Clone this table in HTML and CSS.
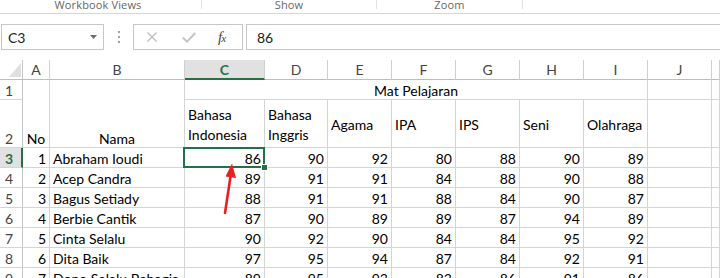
FILE: index.html
```html
<!DOCTYPE html>
<html>
<head>
<meta charset="utf-8">
<link rel="stylesheet" href="styles.css">
</head>
<body>
<div class="ribbon">
  <div class="group g1">Workbook Views</div>
  <div class="group g2">Show</div>
  <div class="group g3">Zoom</div>
</div>
<div class="fbar">
  <div class="namebox"><span>C3</span><svg class="dd" width="7" height="4" viewBox="0 0 7 4"><path d="M0 0H7L3.5 4Z" fill="#6d6d6d"/></svg></div>
  <div class="grip"><i></i><i></i><i></i></div>
  <div class="fxbox">
    <svg class="ic-x" width="10" height="10" viewBox="0 0 10 10"><path d="M0.5 0.5L9.5 9.5M9.5 0.5L0.5 9.5" stroke="#bdbdbd" stroke-width="1.3" fill="none"/></svg>
    <svg class="ic-ok" width="14" height="11" viewBox="0 0 14 11"><path d="M0.8 5.5L5 9.6L13.3 1" stroke="#c4c4c4" stroke-width="2" fill="none"/></svg>
    <span class="fx"><i>f</i><i class="sx">x</i></span>
  </div>
  <div class="formula">86</div>
</div>
<div class="sheet">
  <div class="c corner"><svg width="13" height="14" viewBox="0 0 13 14"><path d="M12 0V14H0Z" fill="#dfdfdf"/></svg></div>
  <div class="c hd">A</div>
  <div class="c hd">B</div>
  <div class="c hd hsel">C</div>
  <div class="c hd">D</div>
  <div class="c hd">E</div>
  <div class="c hd">F</div>
  <div class="c hd">G</div>
  <div class="c hd">H</div>
  <div class="c hd">I</div>
  <div class="c hd">J</div>
  <div class="c hd"></div>

  <div class="c rh">1</div>
  <div class="c ctr span2">No</div>
  <div class="c ctr span2">Nama</div>
  <div class="c ctr span7">Mat Pelajaran</div>
  <div class="c"></div>
  <div class="c"></div>

  <div class="c rh r2">2</div>
  <div class="c wr">Bahasa Indonesia</div>
  <div class="c wr">Bahasa Inggris</div>
  <div class="c wr">Agama</div>
  <div class="c wr">IPA</div>
  <div class="c wr">IPS</div>
  <div class="c wr">Seni</div>
  <div class="c wr">Olahraga</div>
  <div class="c"></div>
  <div class="c"></div>

  <div class="c rh rsel">3</div>
  <div class="c r">1</div><div class="c">Abraham Ioudi</div>
  <div class="c r">86</div><div class="c r">90</div><div class="c r">92</div><div class="c r">80</div><div class="c r">88</div><div class="c r">90</div><div class="c r">89</div>
  <div class="c"></div><div class="c"></div>

  <div class="c rh">4</div>
  <div class="c r">2</div><div class="c">Acep Candra</div>
  <div class="c r">89</div><div class="c r">91</div><div class="c r">91</div><div class="c r">84</div><div class="c r">88</div><div class="c r">90</div><div class="c r">88</div>
  <div class="c"></div><div class="c"></div>

  <div class="c rh">5</div>
  <div class="c r">3</div><div class="c">Bagus Setiady</div>
  <div class="c r">88</div><div class="c r">91</div><div class="c r">91</div><div class="c r">88</div><div class="c r">84</div><div class="c r">90</div><div class="c r">87</div>
  <div class="c"></div><div class="c"></div>

  <div class="c rh">6</div>
  <div class="c r">4</div><div class="c">Berbie Cantik</div>
  <div class="c r">87</div><div class="c r">90</div><div class="c r">89</div><div class="c r">89</div><div class="c r">87</div><div class="c r">94</div><div class="c r">89</div>
  <div class="c"></div><div class="c"></div>

  <div class="c rh">7</div>
  <div class="c r">5</div><div class="c">Cinta Selalu</div>
  <div class="c r">90</div><div class="c r">92</div><div class="c r">90</div><div class="c r">84</div><div class="c r">84</div><div class="c r">95</div><div class="c r">92</div>
  <div class="c"></div><div class="c"></div>

  <div class="c rh">8</div>
  <div class="c r">6</div><div class="c">Dita Baik</div>
  <div class="c r">97</div><div class="c r">95</div><div class="c r">94</div><div class="c r">87</div><div class="c r">84</div><div class="c r">92</div><div class="c r">91</div>
  <div class="c"></div><div class="c"></div>

  <div class="c rh">9</div>
  <div class="c r">7</div><div class="c">Dono Selalu Bahagia</div>
  <div class="c r">89</div><div class="c r">95</div><div class="c r">93</div><div class="c r">83</div><div class="c r">86</div><div class="c r">91</div><div class="c r">86</div>
  <div class="c"></div><div class="c"></div>

  <div class="selbox"></div>
  <div class="handle"></div>
  <svg class="arrow" width="30" height="60" viewBox="0 0 30 60">
    <path d="M10 53L15.6 16" stroke="#e8201f" stroke-width="2.6" fill="none" stroke-linecap="round"/>
    <path d="M17 3.5L21 18L10.5 16.5Z" fill="#e8201f"/>
  </svg>
</div>
</body>
</html>
```
FILE: styles.css
```css
html, body {
  margin: 0;
  padding: 0;
}
body {
  width: 720px;
  height: 278px;
  overflow: hidden;
  background: #ffffff;
  font-family: Lato, "Liberation Sans", sans-serif;
}

/* ribbon group labels */
.ribbon {
  display: flex;
  height: 13px;
  border-bottom: 1px solid #d6d6d6;
}
.group {
  box-sizing: border-box;
  height: 9px;
  line-height: 9px;
  font-family: "Open Sans", sans-serif;
  font-size: 11px;
  color: #666666;
  text-align: center;
  border-right: 1px solid #e1e1e1;
  letter-spacing: 0.15px;
}
.g1 { width: 202px; padding-right: 5px; }
.g2 { width: 175px; }
.g3 { width: 146px; }

/* formula bar */
.fbar {
  display: flex;
  height: 26px;
  margin-top: 10px;
}
.namebox {
  box-sizing: border-box;
  width: 103px;
  margin-left: 1px;
  border: 1px solid #c6c6c6;
  display: flex;
  align-items: center;
  justify-content: space-between;
  padding: 0 6px 0 6px;
  font-size: 14px;
  color: #222222;
}
.grip {
  width: 29px;
  display: flex;
  flex-direction: column;
  align-items: center;
  justify-content: center;
  gap: 3px;
  padding-left: 1px;
  box-sizing: border-box;
}
.grip i {
  display: block;
  width: 2px;
  height: 2px;
  background: #a0a0a0;
}
.fxbox {
  box-sizing: border-box;
  width: 110px;
  border: 1px solid #c6c6c6;
  display: flex;
  align-items: center;
}
.ic-x { margin-left: 13px; }
.ic-ok { margin-left: 25px; margin-top: 1px; }
.fx {
  margin-left: 22px;
  font-family: "Liberation Serif", serif;
  font-size: 15px;
  color: #444444;
  line-height: 1;
}
.fx .sx {
  font-size: 11px;
  margin-left: -1px;
}
.formula {
  box-sizing: border-box;
  flex: 1;
  margin-left: 3px;
  margin-right: -10px;
  border: 1px solid #c6c6c6;
  padding-left: 10px;
  display: flex;
  align-items: center;
  font-size: 14px;
  color: #222222;
}

/* sheet grid */
.sheet {
  position: relative;
  margin-top: 10px;
  display: grid;
  grid-template-columns: 23px 27px 135px 80px 63px repeat(6, 64px) 1fr;
  grid-template-rows: 20px 20px 48px repeat(7, 20px);
}
.c {
  box-sizing: border-box;
  border-right: 1px solid #d4d4d4;
  border-bottom: 1px solid #d4d4d4;
  padding: 0 3px;
  font-size: 14px;
  line-height: 17px;
  color: #000000;
  display: flex;
  align-items: flex-end;
  white-space: nowrap;
  overflow: hidden;
}
.r { justify-content: flex-end; }
.ctr { justify-content: center; }
.span2 { grid-row: span 2; }
.span7 { grid-column: span 7; }
.wr {
  white-space: normal;
  line-height: 20px;
  align-items: center;
  padding-top: 2px;
}
.corner {
  padding: 0 0 2px 0;
  justify-content: flex-end;
  align-items: flex-end;
  border-bottom-color: #bdbdbd;
  border-right-color: #c6c6c6;
}
.hd {
  justify-content: center;
  align-items: center;
  line-height: 19px;
  color: #444444;
  border-bottom-color: #bdbdbd;
  border-right-color: #d0d0d0;
}
.hsel {
  background: #e1e1e1;
  color: #217346;
  font-weight: bold;
  border-bottom: 2px solid #217346;
}
.rh {
  color: #444444;
  padding-left: 5px;
  border-right-color: #c6c6c6;
}
.rsel {
  background: #e1e1e1;
  color: #217346;
  font-weight: bold;
  border-right: 2px solid #217346;
}

/* selection overlay */
.selbox {
  position: absolute;
  left: 183px;
  top: 87px;
  width: 82px;
  height: 21px;
  box-sizing: border-box;
  border: 2px solid #217346;
}
.handle {
  position: absolute;
  left: 261px;
  top: 104px;
  width: 7px;
  height: 7px;
  box-sizing: border-box;
  background: #217346;
  border: 1px solid #ffffff;
}
.arrow {
  position: absolute;
  left: 215px;
  top: 100px;
}
```
